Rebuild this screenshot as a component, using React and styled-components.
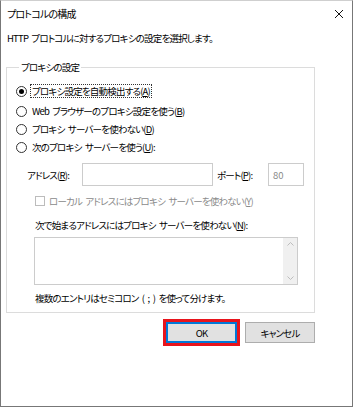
import React from "react";
import styled, { createGlobalStyle } from "styled-components";

const GlobalStyle = createGlobalStyle`
  html, body {
    margin: 0;
    padding: 0;
    background: #ffffff;
  }
  body {
    font-family: "Noto Sans CJK JP", "Noto Sans", sans-serif;
    font-size: 9.5px;
    letter-spacing: -0.8px;
    word-spacing: 2px;
    font-feature-settings: "palt";
    color: #000;
  }
`;

const Window = styled.div`
  box-sizing: border-box;
  width: 353px;
  height: 407px;
  background: #fff;
  border: 1px solid #777;
  border-top-color: #cfcfcf;
  display: flex;
  flex-direction: column;
`;

const TitleBar = styled.div`
  height: 25px;
  display: flex;
  align-items: center;
  justify-content: space-between;
  padding: 0 8px 0 6px;
  font-size: 10px;
`;

const CloseIcon = () => (
  <svg width="10" height="10" viewBox="0 0 10 10">
    <path d="M1 1L9 9M9 1L1 9" stroke="#111" strokeWidth="1" fill="none" />
  </svg>
);

const Description = styled.div`
  height: 20px;
  margin-top: 2px;
  padding-left: 6px;
  display: flex;
  align-items: center;
`;

const Group = styled.fieldset`
  box-sizing: border-box;
  width: 309px;
  margin: 12px 0 0 5px;
  padding: 0 0 6px 9px;
  border: 1px solid #dcdcdc;
`;

const Legend = styled.legend`
  padding: 0 2px;
  margin-left: 3px;
  line-height: 14px;
`;

const RadioList = styled.div`
  margin-top: 8px;
  display: flex;
  flex-direction: column;
`;

const RadioRow = styled.label`
  height: 18px;
  margin-top: ${(p) => p.$gap || 0}px;
  display: flex;
  align-items: center;
  gap: 3px;
`;

const RadioCircle = styled.span`
  box-sizing: border-box;
  width: 11px;
  height: 11px;
  border-radius: 50%;
  border: 1px solid #333;
  display: flex;
  align-items: center;
  justify-content: center;
  &::after {
    content: "";
    width: 5px;
    height: 5px;
    border-radius: 50%;
    background: ${(p) => (p.$checked ? "#000" : "transparent")};
  }
`;

const LabelText = styled.span`
  padding: 0 1px;
  line-height: 12px;
  border: 1px dotted ${(p) => (p.$focus ? "#333" : "transparent")};
`;

const Key = styled.u`
  text-underline-offset: 1px;
`;

const Indent = styled.div`
  margin-left: ${(p) => p.$left}px;
  margin-top: ${(p) => p.$top}px;
`;

const AddressRow = styled.div`
  display: flex;
  align-items: center;
  height: 23px;
`;

const FieldLabel = styled.span`
  width: ${(p) => p.$w}px;
  margin-left: ${(p) => p.$ml || 0}px;
`;

const TextBox = styled.div`
  box-sizing: border-box;
  width: ${(p) => p.$w}px;
  height: 23px;
  border: 1px solid #cccccc;
  color: #8a8a8a;
  display: flex;
  align-items: center;
  padding-left: 4px;
  letter-spacing: 0;
`;

const CheckRow = styled.div`
  height: 16px;
  display: flex;
  align-items: center;
  gap: 4px;
  color: #8a8a8a;
`;

const CheckBox = styled.span`
  box-sizing: border-box;
  width: 10px;
  height: 10px;
  border: 1px solid #bcbcbc;
`;

const Line = styled.div`
  height: 16px;
  display: flex;
  align-items: center;
`;

const ListBox = styled.div`
  box-sizing: border-box;
  width: 264px;
  height: 48px;
  border: 1px solid #cccccc;
  display: flex;
  justify-content: flex-end;
`;

const ScrollBar = styled.div`
  width: 14px;
  background: #f0f0f0;
  display: flex;
  flex-direction: column;
  justify-content: space-between;
  align-items: center;
  padding: 4px 0;
`;

const Chevron = ({ down }) => (
  <svg width="7" height="4" viewBox="0 0 7 4">
    <path
      d={down ? "M0.5 0.5L3.5 3.5L6.5 0.5" : "M0.5 3.5L3.5 0.5L6.5 3.5"}
      stroke="#bdbdbd"
      fill="none"
    />
  </svg>
);

const ButtonRow = styled.div`
  width: 309px;
  margin: 9px 0 0 5px;
  display: flex;
  justify-content: flex-end;
  gap: 8px;
`;

const Button = styled.button`
  box-sizing: border-box;
  width: ${(p) => p.$w}px;
  height: 21px;
  margin: 0;
  padding: 0;
  font: inherit;
  letter-spacing: inherit;
  color: #000;
  background: #e1e1e1;
  border: 1px solid ${(p) => (p.$default ? "#0078d7" : "#adadad")};
  box-shadow: ${(p) => (p.$default ? "inset 0 0 0 1px #0078d7" : "none")};
  outline: ${(p) => (p.$default ? "3px solid #e8141c" : "none")};
  outline-offset: 0;
`;

export default function App() {
  return (
    <>
      <GlobalStyle />
      <Window>
        <TitleBar>
          <span>プロトコルの構成</span>
          <CloseIcon />
        </TitleBar>
        <Description>HTTP プロトコルに対するプロキシの設定を選択します。</Description>
        <Group>
          <Legend>プロキシの設定</Legend>
          <RadioList>
            <RadioRow>
              <RadioCircle $checked />
              <LabelText $focus>
                プロキシ設定を自動検出する(<Key>A</Key>)
              </LabelText>
            </RadioRow>
            <RadioRow $gap={2}>
              <RadioCircle />
              <LabelText>
                Web ブラウザーのプロキシ設定を使う(<Key>B</Key>)
              </LabelText>
            </RadioRow>
            <RadioRow>
              <RadioCircle />
              <LabelText>
                プロキシ サーバーを使わない(<Key>D</Key>)
              </LabelText>
            </RadioRow>
            <RadioRow>
              <RadioCircle />
              <LabelText>
                次のプロキシ サーバーを使う(<Key>U</Key>):
              </LabelText>
            </RadioRow>
          </RadioList>
          <Indent $left={11} $top={7}>
            <AddressRow>
              <FieldLabel $w={55}>
                アドレス(<Key>R</Key>):
              </FieldLabel>
              <TextBox $w={131} />
              <FieldLabel $w={51} $ml={4}>
                ポート(<Key>P</Key>):
              </FieldLabel>
              <TextBox $w={36}>80</TextBox>
            </AddressRow>
          </Indent>
          <Indent $left={19} $top={7}>
            <CheckRow>
              <CheckBox />
              <span>
                ローカル アドレスにはプロキシ サーバーを使わない(<Key>Y</Key>)
              </span>
            </CheckRow>
          </Indent>
          <Indent $left={19} $top={8}>
            <Line>
              <span>
                次で始まるアドレスにはプロキシ サーバーを使わない(<Key>N</Key>):
              </span>
            </Line>
          </Indent>
          <Indent $left={18} $top={4}>
            <ListBox>
              <ScrollBar>
                <Chevron />
                <Chevron down />
              </ScrollBar>
            </ListBox>
          </Indent>
          <Indent $left={19} $top={5}>
            <Line>複数のエントリはセミコロン ( ; ) を使って分けます。</Line>
          </Indent>
        </Group>
        <ButtonRow>
          <Button $w={71} $default>
            OK
          </Button>
          <Button $w={70}>キャンセル</Button>
        </ButtonRow>
      </Window>
    </>
  );
}
